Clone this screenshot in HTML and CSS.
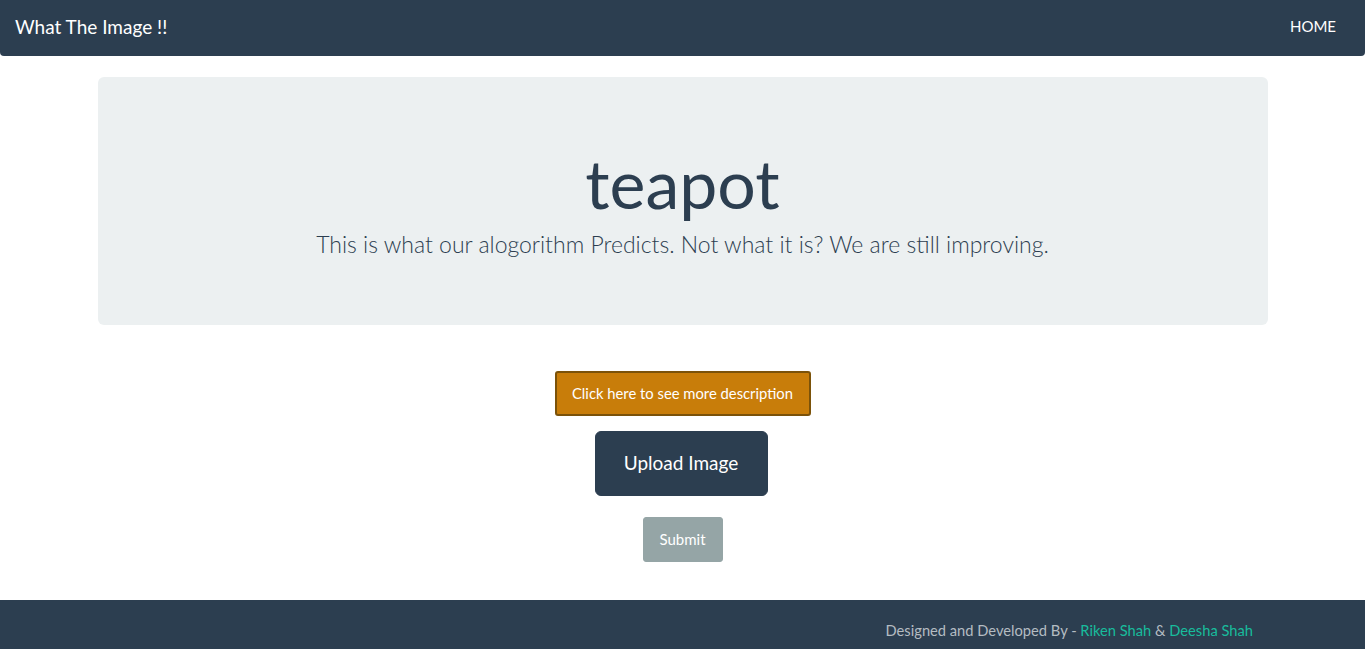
FILE: index.html
```html
<!DOCTYPE html>
<html lang="en">
<head>
<meta charset="utf-8">
<title>What The Image !!</title>
<link rel="stylesheet" href="styles.css">
</head>
<body>
<nav class="navbar">
  <a class="brand" href="#">What The Image !!</a>
  <a class="nav-link" href="#">HOME</a>
</nav>
<main class="container">
  <section class="jumbotron">
    <h1 class="display">teapot</h1>
    <p class="lead">This is what our alogorithm Predicts. Not what it is? We are still improving.</p>
  </section>
  <div class="actions">
    <button class="btn btn-warning">Click here to see more description</button>
    <button class="btn btn-primary btn-lg">Upload Image</button>
    <button class="btn btn-secondary">Submit</button>
  </div>
</main>
<footer class="footer">
  <p class="credits">Designed and Developed By - <a href="#">Riken Shah</a> &amp; <a href="#">Deesha Shah</a></p>
</footer>
</body>
</html>
```
FILE: styles.css
```css
* { box-sizing: border-box; }
html, body { margin: 0; padding: 0; }
body {
  font-family: Lato, "Open Sans", "Liberation Sans", sans-serif;
  font-size: 15px;
  color: #2c3e50;
  background: #fff;
  min-height: 649px;
  display: flex;
  flex-direction: column;
}
a { text-decoration: none; }

.navbar {
  height: 56px;
  background: #2c3e50;
  border-radius: 0 0 4px 4px;
  display: flex;
  align-items: center;
  justify-content: space-between;
  padding: 0 29px 4px 15px;
}
.brand {
  color: #fff;
  font-size: 19px;
  line-height: 1;
}
.nav-link {
  color: #fff;
  font-size: 15px;
}

.container {
  flex: 1;
  width: 1170px;
  margin: 0 auto;
  padding-top: 21px;
}
.jumbotron {
  background: #ecf0f1;
  border-radius: 6px;
  height: 248px;
  padding: 63px 32px 0;
  text-align: center;
}
.display {
  margin: 0;
  font-size: 68px;
  font-weight: 400;
  line-height: 86px;
  color: #2c3e50;
}
.lead {
  margin: 3px 0 0;
  font-size: 23px;
  font-weight: 300;
  line-height: 30px;
  color: #2c3e50;
}

.actions {
  display: flex;
  flex-direction: column;
  align-items: center;
  padding-top: 46px;
}
.btn {
  font-family: inherit;
  color: #fff;
  border: 1px solid transparent;
  cursor: pointer;
  line-height: 1.5;
}
.btn-warning {
  background: #c87d0a;
  border: 2px solid #7b5209;
  border-radius: 3px;
  font-size: 14.8px;
  height: 45px;
  width: 256px;
  padding: 0;
}
.btn-primary {
  background: #2c3e50;
  border-color: #2c3e50;
  border-radius: 6px;
  font-size: 19px;
  height: 65px;
  width: 173px;
  margin-top: 15px;
  margin-right: 3px;
  padding: 0;
}
.btn-secondary {
  background: #95a5a6;
  border-color: #95a5a6;
  border-radius: 3px;
  font-size: 15px;
  height: 45px;
  width: 80px;
  margin-top: 21px;
  padding: 0;
}

.footer {
  margin-top: 38px;
  height: 49px;
  background: #2c3e50;
  display: flex;
  align-items: center;
  justify-content: flex-end;
  padding-right: 112px;
}
.credits {
  margin: 10px 0 0;
  color: #b4bcc2;
  font-size: 14.7px;
}
.credits a { color: #18bc9c; }
```
